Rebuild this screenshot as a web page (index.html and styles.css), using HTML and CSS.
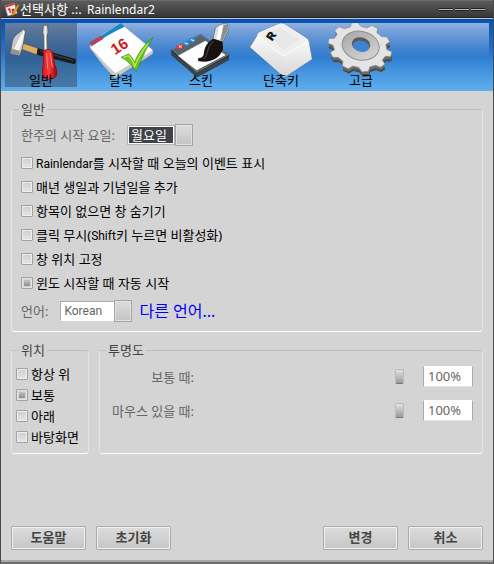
FILE: index.html
```html
<!DOCTYPE html>
<html lang="ko">
<head>
    <meta charset="UTF-8">
    <meta name="viewport" content="width=device-width, initial-scale=1.0">
    <title>선택사항 .:. Rainlendar2</title>
    <link rel="stylesheet" href="styles.css">
</head>
<body>
    <div class="window">
        <header class="titlebar">
            <svg class="app-icon" viewBox="0 0 16 16" aria-hidden="true">
                <path d="M1 4L11 1L14 12L4 15Z" fill="#f4f4f4" stroke="#999" stroke-width=".6"/>
                <path d="M1 4L11 1L11.500 3L1.500 6Z" fill="#d33"/>
                <path d="M4 8l2-.5.8 4M8 8.500l2-.6-1 4 2-.5" fill="none" stroke="#c11" stroke-width="1.400"/>
                <path d="M15 2L9 12l-.5 3 2.500-2L16 4z" fill="#f2a81c" stroke="#9a5d00" stroke-width=".5"/>
            </svg>
            <h1>선택사항 .:. <span class="title-latin">Rainlendar2</span></h1>
            <div class="window-buttons">
                <button type="button" aria-label="최소화"></button>
                <button type="button" aria-label="최대화"></button>
                <button type="button" aria-label="닫기"></button>
            </div>
        </header>

        <nav class="toolbar">
            <div class="tabs">
                <button type="button" class="tab active">
                    <svg viewBox="0 0 216 192" aria-hidden="true">
                        <defs>
                            <linearGradient id="steel" x1="0" y1="0" x2="1" y2="0">
                                <stop offset="0" stop-color="#8d8d8d"/>
                                <stop offset=".5" stop-color="#fafafa"/>
                                <stop offset="1" stop-color="#8a8a8a"/>
                            </linearGradient>
                            <linearGradient id="red" x1="0" y1="0" x2="1" y2="0">
                                <stop offset="0" stop-color="#d8161c"/>
                                <stop offset=".45" stop-color="#f4403c"/>
                                <stop offset="1" stop-color="#a60008"/>
                            </linearGradient>
                        </defs>
                        <path d="M52 60L100 76L97 96L50 79Z" fill="#d9ae68" stroke="#6b4b1d" stroke-width="2"/>
                        <path d="M98 76L212 108Q215 117 209 124L95 95Z" fill="#1b1b1b"/>
                        <path d="M106 84L205 112" stroke="#444" stroke-width="3"/>
                        <path d="M57 17L38 32Q23 42 21 60L16 92L44 98L52 76L56 58L61 26Z" fill="#c8c8c8" stroke="#4b4b4b" stroke-width="2"/>
                        <path d="M57 20L40 50L27 78L42 83L52 56L59 29Z" fill="#f4f4f4"/>
                        <path d="M19 77L43 83L44 97L16 92Z" fill="#929292"/>
                        <path d="M115 7L128 7L130 28L126 38L127 84L117 84L116 38L112 28Z" fill="url(#steel)" stroke="#555" stroke-width="2"/>
                        <path d="M115 89Q115 80 123 80L134 80Q142 82 144 94L148 121Q161 151 151 163Q133 173 117 164Q109 151 115 121Z" fill="url(#red)" stroke="#8d0007" stroke-width="2"/>
                        <path d="M125 91L128 136M136 91L142 132" stroke="#ff8a82" stroke-width="3" stroke-linecap="round"/>
                    </svg>
                    <span>일반</span>
                </button>
                <button type="button" class="tab">
                    <svg viewBox="0 0 216 192" aria-hidden="true">
                        <path d="M14 72L110 8L204 86L202 98L94 166L82 164Z" fill="#777" opacity=".5"/>
                        <path d="M15 62Q52 28 110 3L203 80L203 91L90 164Q58 130 15 75Z" fill="#f8f8f8" stroke="#8f9296" stroke-width="2"/>
                        <path d="M17 75L92 151L200 84L203 92L91 165Q50 128 17 75Z" fill="#c5c8cc"/>
                        <path d="M20 65Q34 98 88 147Q110 120 196 82L117 11Z" fill="#fff"/>
                        <path d="M14 59L108 1L119 11Q64 36 19 70Z" fill="#1685c9"/>
                        <path d="M14 59L46 38L56 47L19 70Z" fill="#b5425c"/>
                        <text x="90" y="97" class="day" transform="rotate(-33 90 97)">16</text>
                        <path d="M108 103L131 93Q143 102 148 119Q165 75 204 43Q182 77 154 145Q132 114 108 103Z" fill="#6cc61c" stroke="#3c8a0c" stroke-width="2"/>
                        <path d="M115 104L130 98Q143 109 149 130Q162 94 190 61" fill="none" stroke="#b5ed62" stroke-width="4"/>
                    </svg>
                    <span>달력</span>
                </button>
                <button type="button" class="tab">
                    <svg viewBox="0 0 216 192" aria-hidden="true">
                        <path d="M19 80L107 34L192 96L191 111L96 163L20 97Z" fill="#24292e"/>
                        <path d="M21 80L107 36L189 96L95 148Z" fill="#59636c" stroke="#858e95" stroke-width="2"/>
                        <path d="M20 84L95 150L191 99L191 111L96 163L20 97Z" fill="#3b4248"/>
                        <path d="M39 98L121 53L182 96L95 142Z" fill="#fdfdfd"/>
                        <path d="M32 70L46 62L59 71L46 80Z" fill="#e22f38"/>
                        <path d="M51 59L64 52L77 62L64 70Z" fill="#2592d8"/>
                        <path d="M69 49L82 42L94 52L82 60Z" fill="#2592d8"/>
                        <path d="M41 67l9 7m0-7l-9 7M59 60l10 3M78 50l9 3" stroke="#fff" stroke-width="3"/>
                        <path d="M144 48L151 15Q162 2 179 1L188 4L189 25L173 57Z" fill="#dedede" stroke="#5c5c5c" stroke-width="2"/>
                        <path d="M154 47L162 13L174 6L166 50Z" fill="#fff"/>
                        <path d="M176 5L187 5L187 24L172 55L166 52Z" fill="#8f8f8f"/>
                        <path d="M144 47L173 56L174 79Q157 122 102 115Q96 111 101 105Q117 105 117 87Q119 64 144 47Z" fill="#17120f"/>
                        <path d="M144 55Q128 70 127 88Q126 99 116 108" fill="none" stroke="#5a4c44" stroke-width="3"/>
                    </svg>
                    <span>스킨</span>
                </button>
                <button type="button" class="tab">
                    <svg viewBox="0 0 216 192" aria-hidden="true">
                        <defs>
                            <linearGradient id="keyside" x1="0" y1="0" x2="0" y2="1">
                                <stop offset="0" stop-color="#fafafa"/>
                                <stop offset="1" stop-color="#d6d6d6"/>
                            </linearGradient>
                        </defs>
                        <path d="M15 72L40 32L103 3Q110 0 118 4L187 47Q192 51 193 58L201 109L118 163Z" fill="#e6e6e6" stroke="#7d8185" stroke-width="2"/>
                        <path d="M16 73L40 34L113 97L118 162Z" fill="url(#keyside)"/>
                        <path d="M113 97L188 50L200 108L118 162Z" fill="url(#keyside)"/>
                        <path d="M42 30L103 4Q110 1 118 5L184 47Q190 52 182 57L122 96Q114 101 107 95L41 39Q36 34 42 30Z" fill="#efefef" stroke="#fbfbfb" stroke-width="3"/>
                        <path d="M58 34L106 14L164 50L116 80Z" fill="#e8e8e8"/>
                        <text x="81" y="55" class="key" transform="rotate(-56 81 55)">R</text>
                    </svg>
                    <span>단축키</span>
                </button>
                <button type="button" class="tab">
                    <svg viewBox="0 0 216 192" aria-hidden="true">
                        <defs>
                            <path id="gear" d="M85-12L101-8L101 12L84 16L77 34L88 48L77 65L60 61L43 73L42 92L22 99L10 84L-10 84L-22 99L-42 92L-43 73L-60 61L-77 65L-88 48L-77 34L-84 16L-101 12L-101-8L-85-12L-79-32L-89-46L-78-64L-60-61L-43-73L-42-91L-23-98L-10-84L10-84L22-98L42-91L43-73L60-61L77-64L88-47L78-33Z"/>
                            <linearGradient id="disc" x1="0" y1="0" x2="1" y2="1">
                                <stop offset="0" stop-color="#a4a4a4"/>
                                <stop offset="1" stop-color="#dadada"/>
                            </linearGradient>
                        </defs>
                        <g transform="translate(107 87) rotate(12) scale(.95 .72)"><use href="#gear" fill="#4c4c4c"/></g>
                        <g transform="translate(106 80) rotate(12) scale(.95 .72)"><use href="#gear" fill="#6b6b6b"/></g>
                        <g transform="translate(105 72) rotate(12) scale(.95 .72)"><use href="#gear" fill="#e4e4e4" stroke="#8c8c8c" stroke-width="2"/></g>
                        <ellipse cx="107" cy="68" rx="56" ry="43" transform="rotate(12 107 68)" fill="url(#disc)" stroke="#909090" stroke-width="3"/>
                        <ellipse cx="108" cy="64" rx="28" ry="21" transform="rotate(12 108 64)" fill="#5a5a5a"/>
                        <ellipse cx="108" cy="70" rx="25" ry="16" transform="rotate(12 108 70)" fill="#3c84d3"/>
                    </svg>
                    <span>고급</span>
                </button>
            </div>
        </nav>

        <form class="content">
            <fieldset class="group general">
                <legend>일반</legend>
                <div class="row">
                    <label for="week-start">한주의 시작 요일:</label>
                    <div class="combo">
                        <select id="week-start" class="selected">
                            <option>월요일</option>
                            <option>일요일</option>
                        </select>
                        <span class="drop"></span>
                    </div>
                </div>
                <div class="checks">
                    <label><input type="checkbox"><span><span class="latin">Rainlendar</span>를 시작할 때 오늘의 이벤트 표시</span></label>
                    <label><input type="checkbox">매년 생일과 기념일을 추가</label>
                    <label><input type="checkbox">항목이 없으면 창 숨기기</label>
                    <label><input type="checkbox"><span>클릭 무시(<span class="latin">Shift</span>키 누르면 비활성화)</span></label>
                    <label><input type="checkbox">창 위치 고정</label>
                    <label><input type="checkbox" checked>윈도 시작할 때 자동 시작</label>
                </div>
                <div class="row">
                    <label for="language">언어:</label>
                    <div class="combo language">
                        <select id="language">
                            <option>Korean</option>
                        </select>
                        <span class="drop"></span>
                    </div>
                    <a href="#">다른 언어...</a>
                </div>
            </fieldset>

            <div class="columns">
                <fieldset class="group position">
                    <legend>위치</legend>
                    <label><input type="radio" name="position">항상 위</label>
                    <label><input type="radio" name="position" checked>보통</label>
                    <label><input type="radio" name="position">아래</label>
                    <label><input type="radio" name="position">바탕화면</label>
                </fieldset>

                <fieldset class="group opacity">
                    <legend>투명도</legend>
                    <div class="slider-row">
                        <label for="normal">보통 때:</label>
                        <input type="range" id="normal" value="100">
                        <input type="text" value="100%" aria-label="보통 때 투명도">
                    </div>
                    <div class="slider-row">
                        <label for="hover">마우스 있을 때:</label>
                        <input type="range" id="hover" value="100">
                        <input type="text" value="100%" aria-label="마우스 있을 때 투명도">
                    </div>
                </fieldset>
            </div>

            <footer class="actions">
                <button type="button">도움말</button>
                <button type="button">초기화</button>
                <button type="submit" class="apply">변경</button>
                <button type="button">취소</button>
            </footer>
        </form>
    </div>
</body>
</html>
```
FILE: styles.css
```css
* {
    box-sizing: border-box;
}

body {
    margin: 0;
    font-family: "Noto Sans", "Noto Sans CJK KR", sans-serif;
    font-size: 13px;
    line-height: 16px;
    color: #000;
    background-color: #d4d4d4;
}

button, input, select {
    margin: 0;
    font: inherit;
}

.window {
    display: flex;
    flex-direction: column;
    min-height: 100vh;
    border: 1px solid #4a4a4a;
    border-top: 0;
    border-bottom: 2px solid #6c6c6c;
}

/* Title bar */
.titlebar {
    display: flex;
    align-items: center;
    height: 19px;
    padding: 0 8px 0 3px;
    background: linear-gradient(#777, #5a5a5a 8%, #383838 92%, #1c1c1c);
    border-bottom: 1px solid #c4c4c4;
}

.app-icon {
    width: 15px;
    height: 15px;
}

.titlebar h1 {
    flex: 1;
    margin: 0;
    padding-left: 1px;
    font-size: 13px;
    font-weight: normal;
    color: #fff;
}

.title-latin {
    padding-left: 2px;
    font-size: 12px;
}

.latin {
    font-family: Roboto, sans-serif;
    font-size: 12px;
}

.window-buttons {
    display: flex;
    gap: 2px;
}

.window-buttons button {
    width: 14px;
    height: 3px;
    padding: 0;
    background-color: #bbb;
    border: 1px solid #222;
    border-width: 1px 0;
}

/* Toolbar */
.toolbar {
    padding: 4px;
    background: linear-gradient(#0650b5, #2572c9 45%, #3d8cda 65%, #60b0ee);
}

.tabs {
    display: flex;
    gap: 8px;
    background: linear-gradient(rgba(255, 255, 255, 0.55), rgba(255, 255, 255, 0) 55%);
}

.tab {
    display: grid;
    width: 72px;
    height: 64px;
    padding: 0;
    background: none;
    border: 0;
    color: #000;
}

.tab.active {
    background-color: rgba(50, 65, 80, 0.45);
}

.tab svg, .tab span {
    grid-area: 1 / 1;
}

.tab svg {
    width: 72px;
    height: 64px;
}

.tab span {
    align-self: end;
    line-height: 14px;
}

.day {
    font-family: "Liberation Sans", sans-serif;
    font-size: 46px;
    font-weight: bold;
    fill: #d31920;
}

.key {
    font-family: "Liberation Sans", sans-serif;
    font-size: 32px;
    font-weight: bold;
    fill: #111;
    stroke: #111;
    stroke-width: 2px;
}

/* Form */
.content {
    flex: 1;
    display: flex;
    flex-direction: column;
    gap: 10px;
    padding: 10px;
    border-bottom: 2px solid #a9a9a9;
}

.group {
    min-width: 0;
    margin: 0;
    border: 1px solid #e4e4e4;
    border-top-color: #bebec6;
    border-bottom-color: #fff;
    border-radius: 4px;
}

.group legend {
    margin-left: 6px;
    padding: 0 2px;
    color: #444;
}

.general {
    padding: 7px 8px 9px 9px;
}

.general legend {
    margin-left: -2px;
}

.row {
    display: flex;
    align-items: center;
    gap: 12px;
    color: #666;
}

.checks {
    display: flex;
    flex-direction: column;
    margin: 5px 0;
}

.checks label {
    display: flex;
    align-items: center;
    gap: 3px;
    height: 24px;
}

input[type="checkbox"], input[type="radio"] {
    appearance: none;
    flex: none;
    width: 12px;
    height: 12px;
    background: linear-gradient(#d0d0d0, #e4e4e4);
    border: 1px solid #a2a2a2;
    border-radius: 1px;
    box-shadow: inset 0 0 0 1px #eee;
}

input[type="checkbox"]:checked, input[type="radio"]:checked {
    padding: 2px;
    background: linear-gradient(#c4c4c4, #8c8c8c) content-box;
    box-shadow: inset 0 0 0 1px #e4e4e4;
}

.combo {
    display: flex;
    align-items: center;
}

.combo select {
    appearance: none;
    width: 48px;
    height: 20px;
    padding: 0 0 0 2px;
    background-color: #fff;
    border: 1px solid #fff;
    border-left-color: #aaa;
    border-top-color: #aaa;
    border-radius: 0;
    color: #666;
}

.combo .selected {
    background-color: #3f4246;
    border: 2px solid #fff;
    color: #fff;
    outline: 1px solid #b4b4b4;
    outline-offset: -1px;
}

.combo.language select {
    width: 54px;
    padding-left: 3px;
    font-family: Roboto, sans-serif;
    font-size: 12px;
}

.drop {
    width: 18px;
    height: 22px;
    background: linear-gradient(#dcdcdc, #c4c4c4);
    border: 1px solid #a4a4a4;
    box-shadow: inset 0 0 0 1px #e2e2e2;
}

.row a {
    margin-left: -5px;
    font-size: 16px;
    color: #00f;
    text-decoration: none;
}

.columns {
    display: grid;
    grid-template-columns: 78px 1fr;
    gap: 10px;
}

.position {
    padding: 5px 0 6px 4px;
}

.position label {
    display: flex;
    align-items: center;
    gap: 3px;
    height: 21px;
    white-space: nowrap;
}

.position legend {
    margin-left: 3px;
}

.opacity {
    padding: 8px 9px 0 8px;
}

.opacity legend {
    margin-left: -2px;
}

.slider-row {
    display: flex;
    align-items: center;
    margin-bottom: 13px;
    color: #666;
}

.slider-row label {
    width: 86px;
    text-align: right;
    white-space: nowrap;
}

.slider-row input[type="range"] {
    appearance: none;
    flex: 1;
    min-width: 0;
    margin: 0 19px 0 10px;
    background: none;
}

.slider-row input[type="range"]::-webkit-slider-thumb {
    appearance: none;
    width: 9px;
    height: 15px;
    background: linear-gradient(#e2e2e2, #999);
    border: 1px solid #bbb;
    border-bottom-color: #777;
    border-radius: 2px;
}

.slider-row input[type="text"] {
    width: 50px;
    height: 21px;
    padding: 0 0 2px 4px;
    background-color: #fff;
    border: 1px solid #aaa;
    border-top-color: #fff;
    border-bottom-color: #e4e4e4;
    color: #666;
}

/* Bottom buttons */
.actions {
    display: flex;
    gap: 10px;
    margin-top: auto;
}

.actions button {
    width: 75px;
    height: 24px;
    padding: 0 0 2px;
    background: linear-gradient(#dcdcdc, #c6c6c6);
    border: 1px solid #aaa;
    border-radius: 1px;
    box-shadow: inset 0 0 0 1px #f0f0f0;
    color: #444;
    font-weight: bold;
}

.actions .apply {
    margin-left: auto;
}
```
